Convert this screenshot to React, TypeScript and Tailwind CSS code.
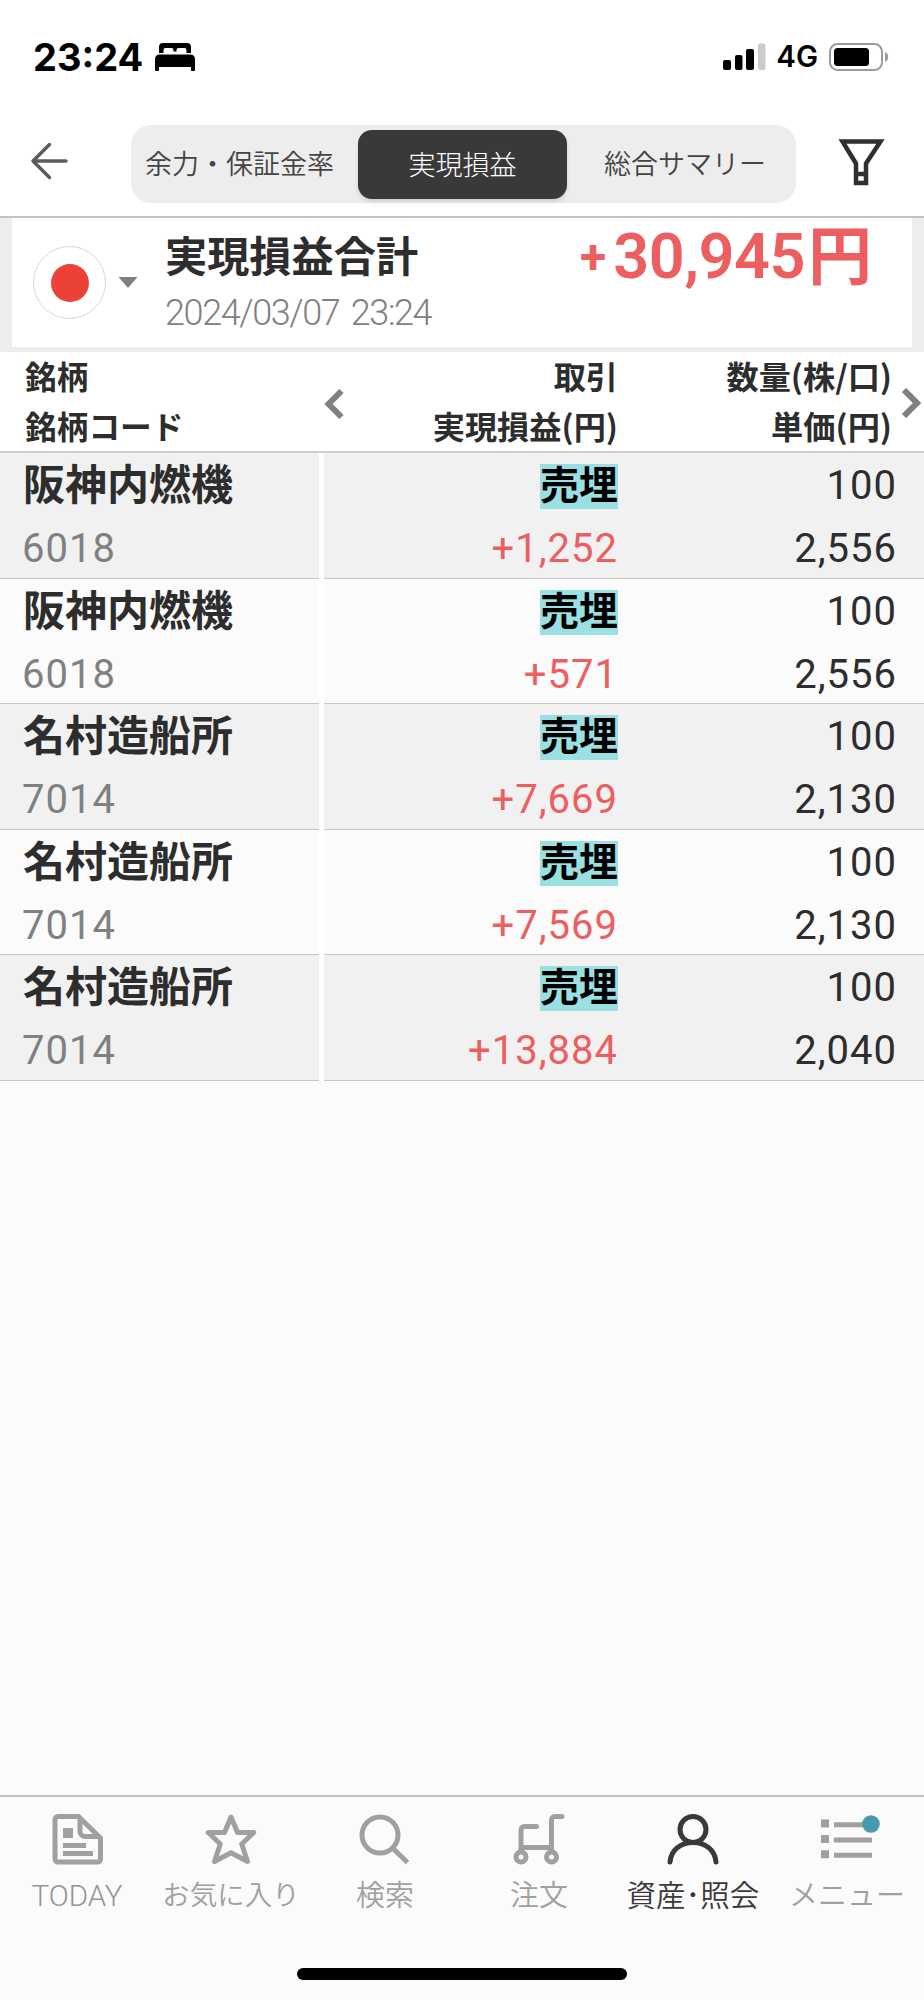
import React from 'react';

interface Trade {
  name: string;
  code: string;
  profit: string;
  quantity: string;
  price: string;
}

const trades: Trade[] = [
  { name: '阪神内燃機', code: '6018', profit: '+1,252', quantity: '100', price: '2,556' },
  { name: '阪神内燃機', code: '6018', profit: '+571', quantity: '100', price: '2,556' },
  { name: '名村造船所', code: '7014', profit: '+7,669', quantity: '100', price: '2,130' },
  { name: '名村造船所', code: '7014', profit: '+7,569', quantity: '100', price: '2,130' },
  { name: '名村造船所', code: '7014', profit: '+13,884', quantity: '100', price: '2,040' },
];

const TodayIcon = () => (
  <svg className="ml-0.5" width="52" height="52" viewBox="0 0 52 52" fill="none" stroke="currentColor" strokeWidth="5">
    <path d="M6 3.500h20.500L48.500 25v21a3 3 0 0 1-3 3H6a3 3 0 0 1-3-3V6.500a3 3 0 0 1 3-3z" strokeLinejoin="round" />
    <path d="M28 4v14.500a5 5 0 0 0 5 5h15" />
    <path d="M11 15h10v10H11zM11 30h23v5H11zM11 38h30v5H11z" fill="currentColor" stroke="none" />
  </svg>
);

const StarIcon = () => (
  <svg width="52" height="52" viewBox="0 0 52 52" fill="none" stroke="currentColor" strokeWidth="5" strokeLinejoin="round">
    <path d="M26 4l6.500 15.500h16.300L36.700 31l5.800 17.500L26 39.700 9.500 48.500 15.300 31 3.200 19.500h16.300z" />
  </svg>
);

const SearchIcon = () => (
  <svg width="52" height="52" viewBox="0 0 52 52" fill="none" stroke="currentColor" strokeWidth="5">
    <circle cx="21" cy="22" r="18" />
    <path d="M33.500 35l15 14.500" />
  </svg>
);

const OrderIcon = () => (
  <svg width="52" height="52" viewBox="0 0 52 52" fill="none" stroke="currentColor" strokeWidth="5" strokeLinecap="round">
    <path d="M8 38V17a3.500 3.500 0 0 1 3.500-3.500H23.500M8 34.500H38M38.500 38V7a3.500 3.500 0 0 1 3.500-3.500H49" />
    <circle cx="8" cy="44" r="5" />
    <circle cx="38.500" cy="44" r="5" />
  </svg>
);

const AssetsIcon = () => (
  <svg width="52" height="52" viewBox="0 0 52 52" fill="none" stroke="currentColor" strokeWidth="5" strokeLinecap="round">
    <circle cx="26" cy="16.500" r="13" />
    <path d="M3 49C4 37.500 13 29.500 26 29.500S48 37.500 49 49" />
  </svg>
);

const MenuIcon = () => (
  <svg width="60" height="52" viewBox="0 0 60 52" fill="currentColor" className="overflow-visible">
    <path d="M4 6.500h8v8H4zM4 22h8v8H4zM4 37.200h8v8H4zM17 9.200h38v5H17zM17 24.500h38v5H17zM17 39.700h38v5H17z" />
    <circle cx="54" cy="11" r="8.800" fill="#4599b0" />
  </svg>
);

const navItems = [
  { label: 'TODAY', icon: TodayIcon, text: "font-['Roboto',sans-serif] text-[29.500px] text-[#949494]" },
  { label: 'お気に入り', icon: StarIcon, text: 'text-[27.500px]' },
  { label: '検索', icon: SearchIcon, text: 'text-[29px]' },
  { label: '注文', icon: OrderIcon, text: 'text-[29px]' },
  { label: '資産･照会', icon: AssetsIcon, text: 'text-[29.500px] text-[#393939]' },
  { label: 'メニュー', icon: MenuIcon, text: 'text-[29px]' },
];

const StatusBar = () => (
  <div className="flex h-[114px] items-center justify-between bg-white pr-[35px] pl-[33px] text-black">
    <div className="flex items-center">
      <span className="w-[122px] font-['Inter',sans-serif] text-[38px] leading-none font-bold">23:24</span>
      <svg width="40" height="28" viewBox="0 0 40 28" fill="currentColor">
        <path d="M4 10V4a4 4 0 0 1 4-4h24a4 4 0 0 1 4 4v6h-4.500V7a2 2 0 0 0-2-2h-6a2 2 0 0 0-2 2v1.500h-3V7a2 2 0 0 0-2-2h-6a2 2 0 0 0-2 2v3z" />
        <path d="M0 16a4.500 4.500 0 0 1 4.500-4.500h31A4.500 4.500 0 0 1 40 16v10.500a1.500 1.500 0 0 1-4 0V24H4v2.500a1.500 1.500 0 0 1-4 0z" />
      </svg>
    </div>
    <div className="flex items-center">
      <svg width="43" height="28" viewBox="0 0 43 28" fill="currentColor">
        <rect x="0" y="17" width="8" height="10" rx="2" />
        <rect x="12" y="12" width="7.500" height="15" rx="2" />
        <rect x="23" y="6" width="8" height="21" rx="2" />
        <rect x="35" y="0.500" width="7.500" height="26.500" rx="2" fill="#cbcbcb" />
      </svg>
      <span className="ml-2.5 font-['Inter',sans-serif] text-[29.500px] leading-none font-semibold">4G</span>
      <svg className="ml-[11px]" width="60" height="28" viewBox="0 0 60 28" fill="none">
        <rect x="1" y="1" width="52" height="26" rx="7.500" stroke="#9b9b9b" strokeWidth="2" />
        <rect x="5" y="5" width="35" height="18" rx="3.500" fill="black" />
        <path d="M56 9a5.500 5.500 0 0 1 0 10z" fill="#9b9b9b" />
      </svg>
    </div>
  </div>
);

const Header = () => (
  <header className="flex h-[104px] items-start border-b-2 border-[#c2c2c2] bg-white pt-[11px] pr-[39px] pl-[30px] text-[#444444]">
    <button className="mt-[17px]">
      <svg width="38" height="38" viewBox="0 0 38 38" fill="none" stroke="#5c5c5c" strokeWidth="3.500" strokeLinecap="round" strokeLinejoin="round">
        <path d="M36 19H3M19.500 2.500L3 19l16.500 16.500" />
      </svg>
    </button>
    <div className="ml-[63px] flex h-[78px] w-[665px] items-center rounded-[20px] bg-[#ededed] font-['Noto_Sans_CJK_JP',sans-serif] text-[27px] leading-[76px] font-[350]">
      <div className="h-[78px] w-[227px] pl-[14px] whitespace-nowrap">余力・保証金率</div>
      <div className="h-[69px] w-[209px] rounded-[14px] bg-[#393939] text-center leading-[67px] font-light text-white shadow-md">実現損益</div>
      <div className="h-[78px] flex-1 pl-[37px] whitespace-nowrap">総合サマリー</div>
    </div>
    <button className="mt-[14px] ml-auto">
      <svg width="47" height="47" viewBox="0 0 47 47" fill="none" stroke="#2f2f2f" strokeWidth="4.500">
        <path d="M4.500 2.500h38L28 24.500V44H18V24.500z" />
        <path d="M18 35h10" />
      </svg>
    </button>
  </header>
);

const Summary = () => (
  <section className="h-[134px] bg-[#ededed] px-3">
    <div className="flex h-[129px] items-start bg-white pl-[21px]">
      <div className="mt-[28px] flex h-[73px] w-[73px] items-center justify-center rounded-full border border-[#d8d8d8]">
        <div className="h-[38px] w-[38px] rounded-full bg-[#eb4136]" />
      </div>
      <svg className="mt-[59px] ml-3" width="20" height="11" viewBox="0 0 20 11" fill="#808080">
        <path d="M0.500 0h19L10 11z" />
      </svg>
      <div className="ml-[27px] flex flex-col whitespace-nowrap">
        <h1 className="mt-[13px] font-['Noto_Sans_CJK_JP',sans-serif] text-[42.200px] leading-[46px] font-bold text-[#2d2d2d]">実現損益合計</h1>
        <span className="mt-[15px] font-['Roboto',sans-serif] text-[36px] leading-[42px] font-light tracking-[-1.400px] text-[#808080] [word-spacing:4px]">2024/03/07 23:24</span>
      </div>
      <div className="ml-auto flex pr-[40px] whitespace-nowrap text-[#ec5e5f]">
        <span className="mt-[9px] mr-[7px] font-['Roboto',sans-serif] text-[48px] leading-[60px] font-bold">+</span>
        <span className="mt-[7px] font-['Roboto',sans-serif] text-[63px] leading-[64px] font-semibold tracking-[-0.500px]">30,945</span>
        <span className="ml-[3px] font-['Noto_Sans_CJK_JP',sans-serif] text-[64px] leading-[66px] font-bold">円</span>
      </div>
    </div>
  </section>
);

const TableHead = () => (
  <div className="flex h-[101px] border-b-2 border-[#cfcfcf] bg-white font-['Noto_Sans_CJK_JP',sans-serif] text-[32.200px] leading-[50px] font-bold whitespace-nowrap text-[#2d2d2d]">
    <div className="-mt-[2px] w-[319px] pl-[25px] text-[31.700px]">
      <div>銘柄</div>
      <div>銘柄コード</div>
    </div>
    <svg className="mt-[37px] ml-[5px]" width="20" height="30" viewBox="0 0 20 30" fill="none" stroke="#808080" strokeWidth="6">
      <path d="M17.500 2L4.500 15l13 13" />
    </svg>
    <div className="-mt-[2px] w-[274px] text-right">
      <div>取引</div>
      <div>実現損益(円)</div>
    </div>
    <div className="-mt-[2px] w-[274px] text-right">
      <div>数量(株/口)</div>
      <div>単価(円)</div>
    </div>
    <svg className="mt-[36px] ml-[10px]" width="20" height="30" viewBox="0 0 20 30" fill="none" stroke="#808080" strokeWidth="6">
      <path d="M2 2l13 13L2 28" />
    </svg>
  </div>
);

const TradeRow = ({ trade, shaded }: { trade: Trade; shaded: boolean }) => {
  const cell = `h-full border-b border-[#c6c6c6] ${shaded ? 'bg-[#f1f1f1]' : 'bg-[#fbfbfb]'}`;

  return (
    <div className="flex h-[125.600px] gap-[5px] bg-white font-['Roboto',sans-serif] text-[40px] tracking-[1px] whitespace-nowrap text-[#2d2d2d]">
      <div className={`${cell} w-[319px] pt-[6px] pl-[23px]`}>
        <div className="font-['Noto_Sans_CJK_JP',sans-serif] text-[42px] leading-[46px] font-bold tracking-normal">{trade.name}</div>
        <div className="mt-[21px] -ml-px leading-[46px] text-[#808080]">{trade.code}</div>
      </div>
      <div className={`${cell} flex flex-1 pt-[11px]`}>
        <div className="flex w-[294px] flex-col items-end">
          <span className="h-[45px] bg-[#9adfe2] font-['Noto_Sans_CJK_JP',sans-serif] text-[39px] leading-[36px] font-bold tracking-normal text-black">売埋</span>
          <span className="mt-[17px] leading-[46px] text-[#ec5e5f]">{trade.profit}</span>
        </div>
        <div className="flex w-[279px] flex-col items-end">
          <span className="-mt-[1px] leading-[46px]">{trade.quantity}</span>
          <span className="mt-[17px] leading-[46px]">{trade.price}</span>
        </div>
      </div>
    </div>
  );
};

const BottomNav = () => (
  <nav className="flex h-[205px] flex-col items-center border-t-2 border-[#c2c2c2]">
    <div className="flex w-full font-['Noto_Sans_CJK_JP',sans-serif] font-[350]">
      {navItems.map((item) => {
        const Icon = item.icon;

        return (
          <div
            key={item.label}
            className={`flex w-[154px] flex-col items-center pt-[16px] whitespace-nowrap ${
              item.icon === AssetsIcon ? 'text-[#393939]' : 'text-[#a0a0a0]'
            }`}
          >
            <Icon />
            <span className={`mt-[9px] h-10 leading-[38px] ${item.text} ${item.label === 'TODAY' ? 'pt-[3px]' : ''}`}>{item.label}</span>
          </div>
        );
      })}
    </div>
    <div className="mt-[54px] h-3 w-[330px] rounded-full bg-black" />
  </nav>
);

export default function App() {
  return (
    <div className="flex h-[2000px] w-[924px] flex-col overflow-hidden bg-[#fbfbfb]">
      <StatusBar />
      <Header />
      <Summary />
      <TableHead />
      <main className="flex-1">
        {trades.map((trade, index) => (
          <TradeRow key={index} trade={trade} shaded={index % 2 === 0} />
        ))}
      </main>
      <BottomNav />
    </div>
  );
}
